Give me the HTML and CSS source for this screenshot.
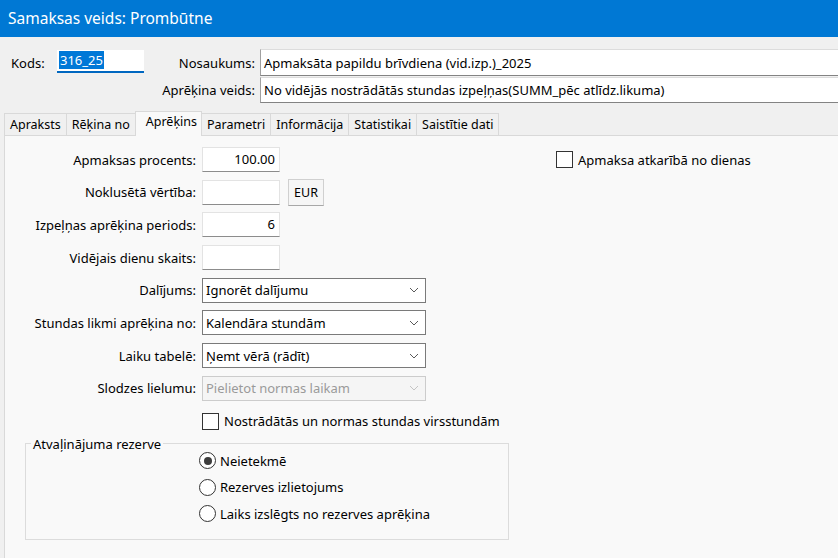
FILE: index.html
```html
<!DOCTYPE html>
<html lang="lv">
<head>
<meta charset="utf-8">
<title>Samaksas veids: Prombūtne</title>
<link rel="stylesheet" href="styles.css">
</head>
<body>
<div class="window">
  <header class="titlebar">Samaksas veids: Prombūtne</header>

  <section class="head">
    <span class="lbl-kods">Kods:</span>
    <div class="kods"><span class="selected">316_25</span></div>
    <span class="lbl-r">Nosaukums:</span>
    <div class="field wide">Apmaksāta papildu brīvdiena (vid.izp.)_2025</div>
    <span class="lbl-r row2">Aprēķina veids:</span>
    <div class="field wide">No vidējās nostrādātās stundas izpeļņas(SUMM_pēc atlīdz.likuma)</div>
  </section>

  <nav class="tabs">
    <span class="tab">Apraksts</span>
    <span class="tab">Rēķina no</span>
    <span class="tab active">Aprēķins</span>
    <span class="tab">Parametri</span>
    <span class="tab">Informācija</span>
    <span class="tab">Statistikai</span>
    <span class="tab">Saistītie dati</span>
  </nav>

  <section class="panel">
    <div class="form">
      <span class="flbl">Apmaksas procents:</span>
      <div class="ctl"><div class="num">100.00</div></div>
      <div class="rightcol"><span class="check"></span><span>Apmaksa atkarībā no dienas</span></div>

      <span class="flbl">Noklusētā vērtība:</span>
      <div class="ctl"><div class="num"></div><span class="btn">EUR</span></div>

      <span class="flbl">Izpeļņas aprēķina periods:</span>
      <div class="ctl"><div class="num">6</div></div>

      <span class="flbl">Vidējais dienu skaits:</span>
      <div class="ctl"><div class="num"></div></div>

      <span class="flbl">Dalījums:</span>
      <div class="ctl"><div class="select"><span>Ignorēt dalījumu</span><svg class="chev" width="10" height="6" viewBox="0 0 10 6"><path d="M1 1 L5 5 L9 1" fill="none" stroke="#5a5a5a" stroke-width="1"/></svg></div></div>

      <span class="flbl">Stundas likmi aprēķina no:</span>
      <div class="ctl"><div class="select"><span>Kalendāra stundām</span><svg class="chev" width="10" height="6" viewBox="0 0 10 6"><path d="M1 1 L5 5 L9 1" fill="none" stroke="#5a5a5a" stroke-width="1"/></svg></div></div>

      <span class="flbl">Laiku tabelē:</span>
      <div class="ctl"><div class="select"><span>Ņemt vērā (rādīt)</span><svg class="chev" width="10" height="6" viewBox="0 0 10 6"><path d="M1 1 L5 5 L9 1" fill="none" stroke="#5a5a5a" stroke-width="1"/></svg></div></div>

      <span class="flbl">Slodzes lielumu:</span>
      <div class="ctl"><div class="select disabled"><span>Pielietot normas laikam</span><svg class="chev" width="10" height="6" viewBox="0 0 10 6"><path d="M1 1 L5 5 L9 1" fill="none" stroke="#c4c4c4" stroke-width="1"/></svg></div></div>

      <span class="flbl"></span>
      <div class="ctl wideline"><span class="check"></span><span>Nostrādātās un normas stundas virsstundām</span></div>
    </div>

    <fieldset class="group">
      <legend>Atvaļinājuma rezerve</legend>
      <div class="radios">
        <div class="radio-row"><span class="radio on"></span><span>Neietekmē</span></div>
        <div class="radio-row"><span class="radio"></span><span>Rezerves izlietojums</span></div>
        <div class="radio-row"><span class="radio"></span><span>Laiks izslēgts no rezerves aprēķina</span></div>
      </div>
    </fieldset>
  </section>
</div>
</body>
</html>
```

FILE: styles.css
```css
* { box-sizing: border-box; }
html, body { margin: 0; padding: 0; height: 100%; overflow: hidden; }
body {
  font-family: "Noto Sans", "DejaVu Sans", sans-serif;
  font-size: 13px;
  color: #000;
  background: #f0f0f0;
}
.window { display: flex; flex-direction: column; height: 100%; }

.titlebar {
  height: 37px;
  background: #0078d4;
  color: #fff;
  font-size: 15.5px;
  line-height: 37px;
  padding-left: 8px;
  flex: none;
}

.head {
  display: grid;
  grid-template-columns: 46px 87px 116px 1fr;
  grid-template-rows: 27px 26px;
  row-gap: 1px;
  padding: 12px 0 0 11px;
  margin-right: -6px;
  flex: none;
}
.lbl-kods { align-self: center; }
.kods {
  align-self: start;
  margin-top: 1px;
  height: 23px;
  background: #fff;
  border-bottom: 2px solid #0067c0;
  padding: 2px 0 0 2px;
  line-height: 17px;
}
.selected { background: #0078d7; color: #fff; padding: 0 1px; }
.lbl-r { text-align: right; padding-right: 5px; align-self: center; }
.row2 { grid-column: 1 / 4; }
.field {
  background: #fff;
  border: 1px solid #dcdcdc;
  border-left-color: #a0a0a0;
  border-bottom-color: #838383;
  padding-left: 3px;
  display: flex;
  align-items: center;
}

.tabs {
  display: flex;
  align-items: flex-end;
  height: 24px;
  margin-top: 8px;
  padding-left: 4px;
  flex: none;
  position: relative;
  z-index: 1;
  font-size: 12.5px;
}
.tab {
  height: 22px;
  line-height: 21px;
  padding: 0 5px;
  border: 1px solid #d9d9d9;
  border-bottom: none;
  margin-right: -1px;
  background: #f0f0f0;
}
.tab.active {
  height: 25px;
  margin-bottom: -1px;
  line-height: 19px;
  padding: 0 4px 0 10px;
  background: #f9f9f9;
  position: relative;
}

.panel {
  flex: 1;
  margin-left: 4px;
  border-top: 1px solid #d9d9d9;
  border-left: 1px solid #d9d9d9;
  background: #f9f9f9;
  padding-top: 11px;
}

.form {
  display: grid;
  grid-template-columns: 191px 224px 1fr;
  grid-auto-rows: 25px;
  column-gap: 6px;
  row-gap: 7.7px;
}
.flbl { grid-column: 1; text-align: right; align-self: center; white-space: nowrap; }
.ctl { grid-column: 2; display: flex; align-items: center; gap: 8px; }
.rightcol {
  grid-column: 3;
  grid-row: 1;
  display: flex;
  align-items: center;
  gap: 5px;
  padding-left: 124px;
}
.num {
  width: 78px;
  height: 25px;
  background: #fff;
  border: 1px solid #e3e3e3;
  border-bottom-color: #8c8c8c;
  text-align: right;
  padding-right: 4px;
  line-height: 22px;
}
.btn {
  width: 36px;
  height: 27px;
  border: 1px solid #d0d0d0;
  border-bottom-color: #a8a8a8;
  background: #f6f6f6;
  display: flex;
  align-items: center;
  justify-content: center;
  font-size: 12.5px;
}
.select {
  width: 224px;
  height: 25px;
  background: #fff;
  border: 1px solid #7a7a7a;
  display: flex;
  align-items: center;
  justify-content: space-between;
  padding: 0 6px 0 3px;
}
.select.disabled { background: #f5f5f5; border-color: #cccccc; color: #9a9a9a; }
.chev { display: block; }
.wideline { white-space: nowrap; gap: 5px; overflow: visible; }

.check {
  width: 17px;
  height: 17px;
  flex: none;
  background: #fff;
  border: 1px solid #333;
}

.group {
  margin: 2px 0 0 20px;
  width: 484px;
  height: 104px;
  border: 1px solid #dcdcdc;
  padding: 0 0 0 173px;
  min-width: 0;
}
.group legend {
  margin-left: -168px;
  padding: 0 2px;
  line-height: 16px;
}
.radios { display: flex; flex-direction: column; gap: 6.5px; margin-top: -1px; }
.radio-row { display: flex; align-items: center; gap: 4px; height: 20px; }
.radio {
  width: 17px;
  height: 17px;
  border-radius: 50%;
  border: 1px solid #333;
  background: #fff;
  flex: none;
  display: flex;
  align-items: center;
  justify-content: center;
}
.radio.on::after {
  content: "";
  width: 8px;
  height: 8px;
  border-radius: 50%;
  background: #3c3c3c;
}
```
